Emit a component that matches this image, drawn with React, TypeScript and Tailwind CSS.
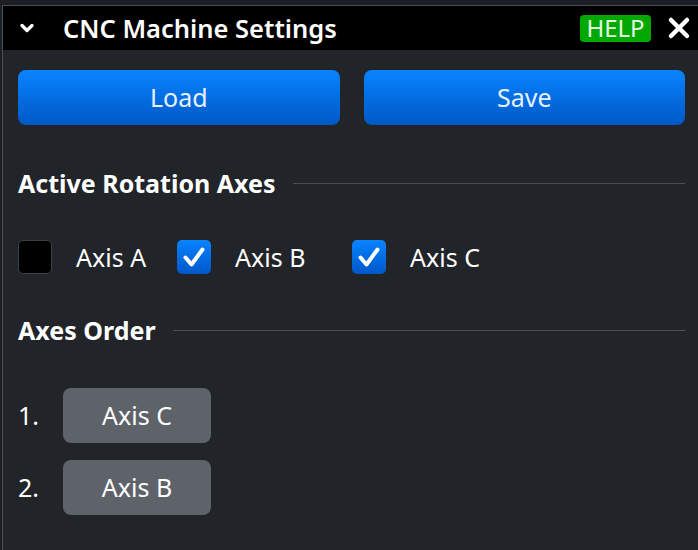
import { ChevronDown } from "lucide-react";

function SectionTitle({ title }: { title: string }) {
  return (
    <div className="flex items-center h-[30px] gap-[17px]">
      <span className="text-[25px] leading-[30px] font-bold text-white whitespace-nowrap">{title}</span>
      <div className="flex-1 h-px bg-[#4b4e55]" />
    </div>
  );
}

function CheckMark() {
  return (
    <svg width="34" height="34" viewBox="0 0 34 34">
      <path
        d="M8.5 17.5 L14.5 24.5 L25.5 9.5"
        fill="none"
        stroke="white"
        strokeWidth="4"
        strokeLinecap="round"
        strokeLinejoin="round"
      />
    </svg>
  );
}

function AxisCheck({ label, checked, width }: { label: string; checked: boolean; width: string }) {
  return (
    <div className={`flex items-center h-[34px] ${width}`}>
      {checked ? (
        <div className="w-[34px] h-[34px] rounded-[5px] bg-gradient-to-b from-[#0a84ff] to-[#0057c8] flex items-center justify-center">
          <CheckMark />
        </div>
      ) : (
        <div className="w-[34px] h-[34px] rounded-[5px] bg-black border border-[#3c3f45]" />
      )}
      <span className="ml-[24px] text-[25px] leading-none text-white">{label}</span>
    </div>
  );
}

function OrderRow({ n, label }: { n: number; label: string }) {
  return (
    <div className="flex items-center">
      <span className="w-[45px] text-[25px] leading-none text-white">{n}.</span>
      <div className="w-[148px] h-[55px] rounded-[8px] bg-[#5e6269] flex items-center justify-center text-[25px] leading-none text-white">
        {label}
      </div>
    </div>
  );
}

export default function App() {
  return (
    <div
      className="w-[698px] h-[550px] bg-[#1c1f23] pl-[2px] pt-[5px] overflow-hidden"
      style={{ fontFamily: '"Noto Sans", "Open Sans", sans-serif' }}
    >
      <div className="h-full border-l border-t border-[#4a4d54] bg-[#212428]">
        {/* Title bar */}
        <div className="h-[44px] bg-black flex items-center pl-[14px] pr-[7px]">
          <ChevronDown size={20} strokeWidth={4} className="text-white" />
          <span className="ml-[26px] mt-[2px] text-[25.5px] leading-none font-semibold text-white">CNC Machine Settings</span>
          <div className="ml-auto h-[27px] w-[71px] rounded-[4px] bg-[#00a800] flex items-center justify-center text-[24px] leading-none text-[#e4f7e4]">
            HELP
          </div>
          <svg width="24" height="24" viewBox="0 0 24 24" className="ml-[16px]">
            <path d="M4 4 L20 20 M20 4 L4 20" stroke="white" strokeWidth="4.5" strokeLinecap="round" />
          </svg>
        </div>

        <div className="pl-[15px] pr-[13px]">
          <div className="mt-[20px] flex gap-[24px]">
            <button className="flex-1 h-[55px] rounded-[8px] bg-gradient-to-b from-[#0a84ff] to-[#0058c6] text-[25px] leading-none text-[#e6f1ff]">
              Load
            </button>
            <button className="flex-1 h-[55px] rounded-[8px] bg-gradient-to-b from-[#0a84ff] to-[#0058c6] text-[25px] leading-none text-[#e6f1ff]">
              Save
            </button>
          </div>

          <div className="mt-[43px]">
            <SectionTitle title="Active Rotation Axes" />
          </div>

          <div className="mt-[42px] flex">
            <AxisCheck label="Axis A" checked={false} width="w-[159px]" />
            <AxisCheck label="Axis B" checked width="w-[175px]" />
            <AxisCheck label="Axis C" checked width="w-[150px]" />
          </div>

          <div className="mt-[41px]">
            <SectionTitle title="Axes Order" />
          </div>

          <div className="mt-[43px] flex flex-col gap-[17px]">
            <OrderRow n={1} label="Axis C" />
            <OrderRow n={2} label="Axis B" />
          </div>
        </div>
      </div>
    </div>
  );
}
